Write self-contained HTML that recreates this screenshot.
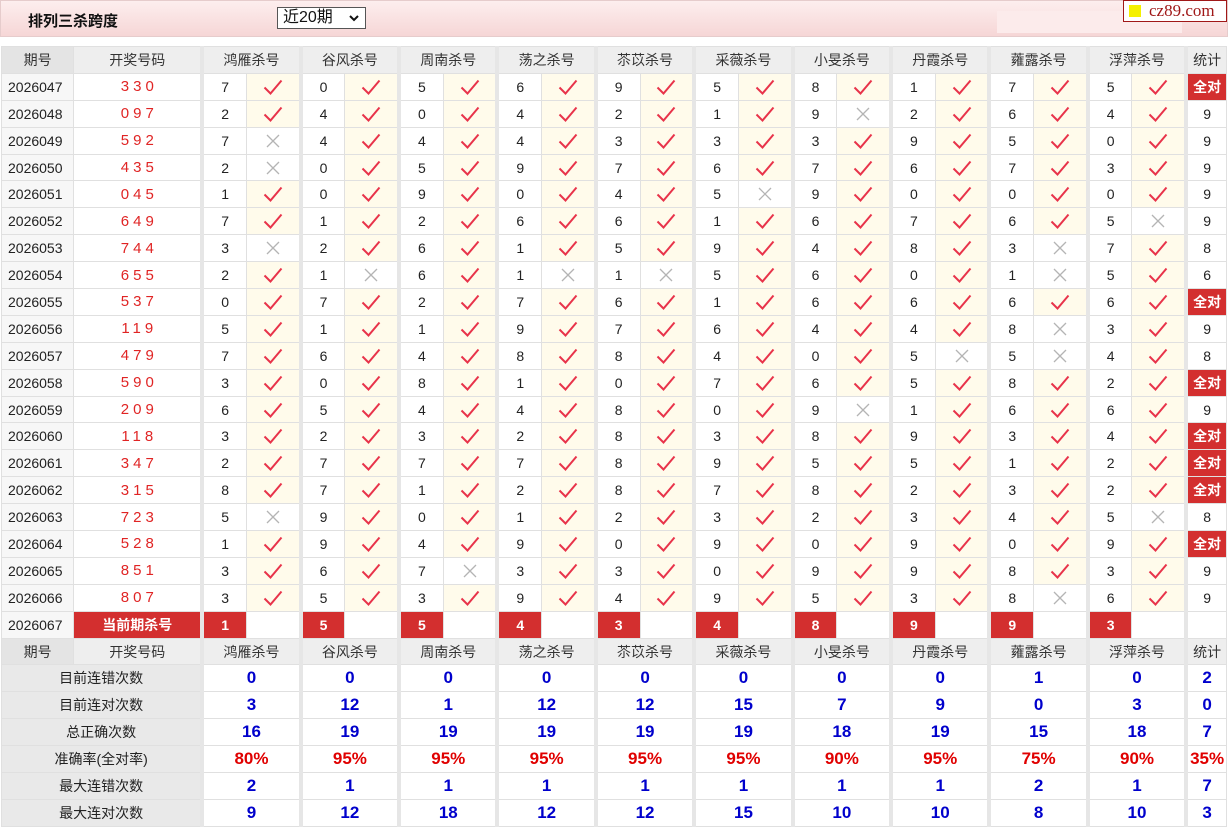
<!DOCTYPE html>
<html><head><meta charset="utf-8"><style>
*{box-sizing:border-box}
body{margin:0;background:#fff;font-family:"Liberation Sans","Noto Sans CJK SC",sans-serif;width:1228px;height:829px;overflow:hidden;position:relative}
.top{position:absolute;left:0;top:0;width:1228px;height:37px;background:linear-gradient(#fdeeee,#f6d6d6);border:1px solid #e6cccc}
.title{position:absolute;left:27px;top:9px;font-size:15px;font-weight:bold;color:#111}
.sel{position:absolute;left:277px;top:7px;width:89px;height:22px;border:1px solid #555;background:#fff;font-size:16px;padding-left:5px;line-height:20px;color:#111}
.sel svg{position:absolute;right:6px;top:7px}
.wbox{position:absolute;left:996px;top:10px;width:185px;height:22px;background:#fcebeb}
.logo{position:absolute;left:1123px;top:0;width:104px;height:22px;background:#fff;border:1px solid #a01818;font-family:"Liberation Serif",serif;font-size:17px;color:#a01818;line-height:19px;padding-left:25px}
.logo i{position:absolute;left:5px;top:4px;width:12px;height:12px;background:#f4f000}
table{position:absolute;left:1px;top:46px;width:1226px;border-collapse:collapse;table-layout:fixed}
td{height:26.9px;border:1px solid #e0e0e0;text-align:center;font-size:14px;color:#222;padding:0;white-space:nowrap}
tr.h td{background:#eeeeee;color:#333;font-size:14px}
td.g{border-right:4px solid #e6e6e6}
td.p{text-align:left;padding-left:6px;background:#f7f7f7}
tr.h td.p{text-align:center;padding:0;background:#e4e4e4}
td.n{color:#e02424;letter-spacing:4px;padding-left:4px;font-size:15px}
td.k{background:#fffbeb}
td.x{background:#fff}
td.r{background:#d32f2f;color:#fff;font-weight:bold}
td.s{font-size:14px}
td.a{background:#d32f2f;color:#fff;font-weight:bold;font-size:14px}
td.l{background:#e9e9e9;color:#222}
td.b{color:#0000cc;font-weight:bold;font-size:17px}
td.pc{color:#e00000;font-weight:bold;font-size:17px}
svg.c,svg.xx{display:block;margin:auto}
</style></head><body>
<svg width="0" height="0" style="position:absolute"><defs>
<symbol id="c" viewBox="0 0 20 16"><path d="M1.5 8.5 L7.5 14.5 L18.5 1.5" fill="none" stroke="#e8334a" stroke-width="2"/></symbol>
<symbol id="x" viewBox="0 0 16 16"><path d="M2 2 L14 14 M14 2 L2 14" fill="none" stroke="#b4b4b4" stroke-width="1.3"/></symbol>
</defs></svg>
<div class="top"><div class="title">排列三杀跨度</div><div class="wbox"></div></div>
<div class="sel">近20期<svg width="10" height="7" viewBox="0 0 10 7"><path d="M1 1 L5 5 L9 1" fill="none" stroke="#111" stroke-width="2"/></svg></div>
<div class="logo"><i></i>cz89.com</div>
<table>
<colgroup><col style="width:72px"><col style="width:128px">
<col style="width:44px"><col style="width:54px"><col style="width:44px"><col style="width:54px"><col style="width:44px"><col style="width:54px"><col style="width:44px"><col style="width:54px"><col style="width:44px"><col style="width:54px"><col style="width:44px"><col style="width:54px"><col style="width:44px"><col style="width:54px"><col style="width:44px"><col style="width:54px"><col style="width:44px"><col style="width:54px"><col style="width:44px"><col style="width:54px"><col style="width:40px"></colgroup>
<tr class="h"><td class="p">期号</td><td class="g">开奖号码</td><td colspan="2" class="g">鸿雁杀号</td><td colspan="2" class="g">谷风杀号</td><td colspan="2" class="g">周南杀号</td><td colspan="2" class="g">荡之杀号</td><td colspan="2" class="g">苶苡杀号</td><td colspan="2" class="g">采薇杀号</td><td colspan="2" class="g">小旻杀号</td><td colspan="2" class="g">丹霞杀号</td><td colspan="2" class="g">蕹露杀号</td><td colspan="2" class="g">浮萍杀号</td><td>统计</td></tr>
<tr><td class="p">2026047</td><td class="n g">330</td><td>7</td><td class="k g"><svg class="c" width="20" height="16"><use href="#c"/></svg></td><td>0</td><td class="k g"><svg class="c" width="20" height="16"><use href="#c"/></svg></td><td>5</td><td class="k g"><svg class="c" width="20" height="16"><use href="#c"/></svg></td><td>6</td><td class="k g"><svg class="c" width="20" height="16"><use href="#c"/></svg></td><td>9</td><td class="k g"><svg class="c" width="20" height="16"><use href="#c"/></svg></td><td>5</td><td class="k g"><svg class="c" width="20" height="16"><use href="#c"/></svg></td><td>8</td><td class="k g"><svg class="c" width="20" height="16"><use href="#c"/></svg></td><td>1</td><td class="k g"><svg class="c" width="20" height="16"><use href="#c"/></svg></td><td>7</td><td class="k g"><svg class="c" width="20" height="16"><use href="#c"/></svg></td><td>5</td><td class="k g"><svg class="c" width="20" height="16"><use href="#c"/></svg></td><td class="a">全对</td></tr>
<tr><td class="p">2026048</td><td class="n g">097</td><td>2</td><td class="k g"><svg class="c" width="20" height="16"><use href="#c"/></svg></td><td>4</td><td class="k g"><svg class="c" width="20" height="16"><use href="#c"/></svg></td><td>0</td><td class="k g"><svg class="c" width="20" height="16"><use href="#c"/></svg></td><td>4</td><td class="k g"><svg class="c" width="20" height="16"><use href="#c"/></svg></td><td>2</td><td class="k g"><svg class="c" width="20" height="16"><use href="#c"/></svg></td><td>1</td><td class="k g"><svg class="c" width="20" height="16"><use href="#c"/></svg></td><td>9</td><td class="x g"><svg class="xx" width="16" height="16"><use href="#x"/></svg></td><td>2</td><td class="k g"><svg class="c" width="20" height="16"><use href="#c"/></svg></td><td>6</td><td class="k g"><svg class="c" width="20" height="16"><use href="#c"/></svg></td><td>4</td><td class="k g"><svg class="c" width="20" height="16"><use href="#c"/></svg></td><td class="s">9</td></tr>
<tr><td class="p">2026049</td><td class="n g">592</td><td>7</td><td class="x g"><svg class="xx" width="16" height="16"><use href="#x"/></svg></td><td>4</td><td class="k g"><svg class="c" width="20" height="16"><use href="#c"/></svg></td><td>4</td><td class="k g"><svg class="c" width="20" height="16"><use href="#c"/></svg></td><td>4</td><td class="k g"><svg class="c" width="20" height="16"><use href="#c"/></svg></td><td>3</td><td class="k g"><svg class="c" width="20" height="16"><use href="#c"/></svg></td><td>3</td><td class="k g"><svg class="c" width="20" height="16"><use href="#c"/></svg></td><td>3</td><td class="k g"><svg class="c" width="20" height="16"><use href="#c"/></svg></td><td>9</td><td class="k g"><svg class="c" width="20" height="16"><use href="#c"/></svg></td><td>5</td><td class="k g"><svg class="c" width="20" height="16"><use href="#c"/></svg></td><td>0</td><td class="k g"><svg class="c" width="20" height="16"><use href="#c"/></svg></td><td class="s">9</td></tr>
<tr><td class="p">2026050</td><td class="n g">435</td><td>2</td><td class="x g"><svg class="xx" width="16" height="16"><use href="#x"/></svg></td><td>0</td><td class="k g"><svg class="c" width="20" height="16"><use href="#c"/></svg></td><td>5</td><td class="k g"><svg class="c" width="20" height="16"><use href="#c"/></svg></td><td>9</td><td class="k g"><svg class="c" width="20" height="16"><use href="#c"/></svg></td><td>7</td><td class="k g"><svg class="c" width="20" height="16"><use href="#c"/></svg></td><td>6</td><td class="k g"><svg class="c" width="20" height="16"><use href="#c"/></svg></td><td>7</td><td class="k g"><svg class="c" width="20" height="16"><use href="#c"/></svg></td><td>6</td><td class="k g"><svg class="c" width="20" height="16"><use href="#c"/></svg></td><td>7</td><td class="k g"><svg class="c" width="20" height="16"><use href="#c"/></svg></td><td>3</td><td class="k g"><svg class="c" width="20" height="16"><use href="#c"/></svg></td><td class="s">9</td></tr>
<tr><td class="p">2026051</td><td class="n g">045</td><td>1</td><td class="k g"><svg class="c" width="20" height="16"><use href="#c"/></svg></td><td>0</td><td class="k g"><svg class="c" width="20" height="16"><use href="#c"/></svg></td><td>9</td><td class="k g"><svg class="c" width="20" height="16"><use href="#c"/></svg></td><td>0</td><td class="k g"><svg class="c" width="20" height="16"><use href="#c"/></svg></td><td>4</td><td class="k g"><svg class="c" width="20" height="16"><use href="#c"/></svg></td><td>5</td><td class="x g"><svg class="xx" width="16" height="16"><use href="#x"/></svg></td><td>9</td><td class="k g"><svg class="c" width="20" height="16"><use href="#c"/></svg></td><td>0</td><td class="k g"><svg class="c" width="20" height="16"><use href="#c"/></svg></td><td>0</td><td class="k g"><svg class="c" width="20" height="16"><use href="#c"/></svg></td><td>0</td><td class="k g"><svg class="c" width="20" height="16"><use href="#c"/></svg></td><td class="s">9</td></tr>
<tr><td class="p">2026052</td><td class="n g">649</td><td>7</td><td class="k g"><svg class="c" width="20" height="16"><use href="#c"/></svg></td><td>1</td><td class="k g"><svg class="c" width="20" height="16"><use href="#c"/></svg></td><td>2</td><td class="k g"><svg class="c" width="20" height="16"><use href="#c"/></svg></td><td>6</td><td class="k g"><svg class="c" width="20" height="16"><use href="#c"/></svg></td><td>6</td><td class="k g"><svg class="c" width="20" height="16"><use href="#c"/></svg></td><td>1</td><td class="k g"><svg class="c" width="20" height="16"><use href="#c"/></svg></td><td>6</td><td class="k g"><svg class="c" width="20" height="16"><use href="#c"/></svg></td><td>7</td><td class="k g"><svg class="c" width="20" height="16"><use href="#c"/></svg></td><td>6</td><td class="k g"><svg class="c" width="20" height="16"><use href="#c"/></svg></td><td>5</td><td class="x g"><svg class="xx" width="16" height="16"><use href="#x"/></svg></td><td class="s">9</td></tr>
<tr><td class="p">2026053</td><td class="n g">744</td><td>3</td><td class="x g"><svg class="xx" width="16" height="16"><use href="#x"/></svg></td><td>2</td><td class="k g"><svg class="c" width="20" height="16"><use href="#c"/></svg></td><td>6</td><td class="k g"><svg class="c" width="20" height="16"><use href="#c"/></svg></td><td>1</td><td class="k g"><svg class="c" width="20" height="16"><use href="#c"/></svg></td><td>5</td><td class="k g"><svg class="c" width="20" height="16"><use href="#c"/></svg></td><td>9</td><td class="k g"><svg class="c" width="20" height="16"><use href="#c"/></svg></td><td>4</td><td class="k g"><svg class="c" width="20" height="16"><use href="#c"/></svg></td><td>8</td><td class="k g"><svg class="c" width="20" height="16"><use href="#c"/></svg></td><td>3</td><td class="x g"><svg class="xx" width="16" height="16"><use href="#x"/></svg></td><td>7</td><td class="k g"><svg class="c" width="20" height="16"><use href="#c"/></svg></td><td class="s">8</td></tr>
<tr><td class="p">2026054</td><td class="n g">655</td><td>2</td><td class="k g"><svg class="c" width="20" height="16"><use href="#c"/></svg></td><td>1</td><td class="x g"><svg class="xx" width="16" height="16"><use href="#x"/></svg></td><td>6</td><td class="k g"><svg class="c" width="20" height="16"><use href="#c"/></svg></td><td>1</td><td class="x g"><svg class="xx" width="16" height="16"><use href="#x"/></svg></td><td>1</td><td class="x g"><svg class="xx" width="16" height="16"><use href="#x"/></svg></td><td>5</td><td class="k g"><svg class="c" width="20" height="16"><use href="#c"/></svg></td><td>6</td><td class="k g"><svg class="c" width="20" height="16"><use href="#c"/></svg></td><td>0</td><td class="k g"><svg class="c" width="20" height="16"><use href="#c"/></svg></td><td>1</td><td class="x g"><svg class="xx" width="16" height="16"><use href="#x"/></svg></td><td>5</td><td class="k g"><svg class="c" width="20" height="16"><use href="#c"/></svg></td><td class="s">6</td></tr>
<tr><td class="p">2026055</td><td class="n g">537</td><td>0</td><td class="k g"><svg class="c" width="20" height="16"><use href="#c"/></svg></td><td>7</td><td class="k g"><svg class="c" width="20" height="16"><use href="#c"/></svg></td><td>2</td><td class="k g"><svg class="c" width="20" height="16"><use href="#c"/></svg></td><td>7</td><td class="k g"><svg class="c" width="20" height="16"><use href="#c"/></svg></td><td>6</td><td class="k g"><svg class="c" width="20" height="16"><use href="#c"/></svg></td><td>1</td><td class="k g"><svg class="c" width="20" height="16"><use href="#c"/></svg></td><td>6</td><td class="k g"><svg class="c" width="20" height="16"><use href="#c"/></svg></td><td>6</td><td class="k g"><svg class="c" width="20" height="16"><use href="#c"/></svg></td><td>6</td><td class="k g"><svg class="c" width="20" height="16"><use href="#c"/></svg></td><td>6</td><td class="k g"><svg class="c" width="20" height="16"><use href="#c"/></svg></td><td class="a">全对</td></tr>
<tr><td class="p">2026056</td><td class="n g">119</td><td>5</td><td class="k g"><svg class="c" width="20" height="16"><use href="#c"/></svg></td><td>1</td><td class="k g"><svg class="c" width="20" height="16"><use href="#c"/></svg></td><td>1</td><td class="k g"><svg class="c" width="20" height="16"><use href="#c"/></svg></td><td>9</td><td class="k g"><svg class="c" width="20" height="16"><use href="#c"/></svg></td><td>7</td><td class="k g"><svg class="c" width="20" height="16"><use href="#c"/></svg></td><td>6</td><td class="k g"><svg class="c" width="20" height="16"><use href="#c"/></svg></td><td>4</td><td class="k g"><svg class="c" width="20" height="16"><use href="#c"/></svg></td><td>4</td><td class="k g"><svg class="c" width="20" height="16"><use href="#c"/></svg></td><td>8</td><td class="x g"><svg class="xx" width="16" height="16"><use href="#x"/></svg></td><td>3</td><td class="k g"><svg class="c" width="20" height="16"><use href="#c"/></svg></td><td class="s">9</td></tr>
<tr><td class="p">2026057</td><td class="n g">479</td><td>7</td><td class="k g"><svg class="c" width="20" height="16"><use href="#c"/></svg></td><td>6</td><td class="k g"><svg class="c" width="20" height="16"><use href="#c"/></svg></td><td>4</td><td class="k g"><svg class="c" width="20" height="16"><use href="#c"/></svg></td><td>8</td><td class="k g"><svg class="c" width="20" height="16"><use href="#c"/></svg></td><td>8</td><td class="k g"><svg class="c" width="20" height="16"><use href="#c"/></svg></td><td>4</td><td class="k g"><svg class="c" width="20" height="16"><use href="#c"/></svg></td><td>0</td><td class="k g"><svg class="c" width="20" height="16"><use href="#c"/></svg></td><td>5</td><td class="x g"><svg class="xx" width="16" height="16"><use href="#x"/></svg></td><td>5</td><td class="x g"><svg class="xx" width="16" height="16"><use href="#x"/></svg></td><td>4</td><td class="k g"><svg class="c" width="20" height="16"><use href="#c"/></svg></td><td class="s">8</td></tr>
<tr><td class="p">2026058</td><td class="n g">590</td><td>3</td><td class="k g"><svg class="c" width="20" height="16"><use href="#c"/></svg></td><td>0</td><td class="k g"><svg class="c" width="20" height="16"><use href="#c"/></svg></td><td>8</td><td class="k g"><svg class="c" width="20" height="16"><use href="#c"/></svg></td><td>1</td><td class="k g"><svg class="c" width="20" height="16"><use href="#c"/></svg></td><td>0</td><td class="k g"><svg class="c" width="20" height="16"><use href="#c"/></svg></td><td>7</td><td class="k g"><svg class="c" width="20" height="16"><use href="#c"/></svg></td><td>6</td><td class="k g"><svg class="c" width="20" height="16"><use href="#c"/></svg></td><td>5</td><td class="k g"><svg class="c" width="20" height="16"><use href="#c"/></svg></td><td>8</td><td class="k g"><svg class="c" width="20" height="16"><use href="#c"/></svg></td><td>2</td><td class="k g"><svg class="c" width="20" height="16"><use href="#c"/></svg></td><td class="a">全对</td></tr>
<tr><td class="p">2026059</td><td class="n g">209</td><td>6</td><td class="k g"><svg class="c" width="20" height="16"><use href="#c"/></svg></td><td>5</td><td class="k g"><svg class="c" width="20" height="16"><use href="#c"/></svg></td><td>4</td><td class="k g"><svg class="c" width="20" height="16"><use href="#c"/></svg></td><td>4</td><td class="k g"><svg class="c" width="20" height="16"><use href="#c"/></svg></td><td>8</td><td class="k g"><svg class="c" width="20" height="16"><use href="#c"/></svg></td><td>0</td><td class="k g"><svg class="c" width="20" height="16"><use href="#c"/></svg></td><td>9</td><td class="x g"><svg class="xx" width="16" height="16"><use href="#x"/></svg></td><td>1</td><td class="k g"><svg class="c" width="20" height="16"><use href="#c"/></svg></td><td>6</td><td class="k g"><svg class="c" width="20" height="16"><use href="#c"/></svg></td><td>6</td><td class="k g"><svg class="c" width="20" height="16"><use href="#c"/></svg></td><td class="s">9</td></tr>
<tr><td class="p">2026060</td><td class="n g">118</td><td>3</td><td class="k g"><svg class="c" width="20" height="16"><use href="#c"/></svg></td><td>2</td><td class="k g"><svg class="c" width="20" height="16"><use href="#c"/></svg></td><td>3</td><td class="k g"><svg class="c" width="20" height="16"><use href="#c"/></svg></td><td>2</td><td class="k g"><svg class="c" width="20" height="16"><use href="#c"/></svg></td><td>8</td><td class="k g"><svg class="c" width="20" height="16"><use href="#c"/></svg></td><td>3</td><td class="k g"><svg class="c" width="20" height="16"><use href="#c"/></svg></td><td>8</td><td class="k g"><svg class="c" width="20" height="16"><use href="#c"/></svg></td><td>9</td><td class="k g"><svg class="c" width="20" height="16"><use href="#c"/></svg></td><td>3</td><td class="k g"><svg class="c" width="20" height="16"><use href="#c"/></svg></td><td>4</td><td class="k g"><svg class="c" width="20" height="16"><use href="#c"/></svg></td><td class="a">全对</td></tr>
<tr><td class="p">2026061</td><td class="n g">347</td><td>2</td><td class="k g"><svg class="c" width="20" height="16"><use href="#c"/></svg></td><td>7</td><td class="k g"><svg class="c" width="20" height="16"><use href="#c"/></svg></td><td>7</td><td class="k g"><svg class="c" width="20" height="16"><use href="#c"/></svg></td><td>7</td><td class="k g"><svg class="c" width="20" height="16"><use href="#c"/></svg></td><td>8</td><td class="k g"><svg class="c" width="20" height="16"><use href="#c"/></svg></td><td>9</td><td class="k g"><svg class="c" width="20" height="16"><use href="#c"/></svg></td><td>5</td><td class="k g"><svg class="c" width="20" height="16"><use href="#c"/></svg></td><td>5</td><td class="k g"><svg class="c" width="20" height="16"><use href="#c"/></svg></td><td>1</td><td class="k g"><svg class="c" width="20" height="16"><use href="#c"/></svg></td><td>2</td><td class="k g"><svg class="c" width="20" height="16"><use href="#c"/></svg></td><td class="a">全对</td></tr>
<tr><td class="p">2026062</td><td class="n g">315</td><td>8</td><td class="k g"><svg class="c" width="20" height="16"><use href="#c"/></svg></td><td>7</td><td class="k g"><svg class="c" width="20" height="16"><use href="#c"/></svg></td><td>1</td><td class="k g"><svg class="c" width="20" height="16"><use href="#c"/></svg></td><td>2</td><td class="k g"><svg class="c" width="20" height="16"><use href="#c"/></svg></td><td>8</td><td class="k g"><svg class="c" width="20" height="16"><use href="#c"/></svg></td><td>7</td><td class="k g"><svg class="c" width="20" height="16"><use href="#c"/></svg></td><td>8</td><td class="k g"><svg class="c" width="20" height="16"><use href="#c"/></svg></td><td>2</td><td class="k g"><svg class="c" width="20" height="16"><use href="#c"/></svg></td><td>3</td><td class="k g"><svg class="c" width="20" height="16"><use href="#c"/></svg></td><td>2</td><td class="k g"><svg class="c" width="20" height="16"><use href="#c"/></svg></td><td class="a">全对</td></tr>
<tr><td class="p">2026063</td><td class="n g">723</td><td>5</td><td class="x g"><svg class="xx" width="16" height="16"><use href="#x"/></svg></td><td>9</td><td class="k g"><svg class="c" width="20" height="16"><use href="#c"/></svg></td><td>0</td><td class="k g"><svg class="c" width="20" height="16"><use href="#c"/></svg></td><td>1</td><td class="k g"><svg class="c" width="20" height="16"><use href="#c"/></svg></td><td>2</td><td class="k g"><svg class="c" width="20" height="16"><use href="#c"/></svg></td><td>3</td><td class="k g"><svg class="c" width="20" height="16"><use href="#c"/></svg></td><td>2</td><td class="k g"><svg class="c" width="20" height="16"><use href="#c"/></svg></td><td>3</td><td class="k g"><svg class="c" width="20" height="16"><use href="#c"/></svg></td><td>4</td><td class="k g"><svg class="c" width="20" height="16"><use href="#c"/></svg></td><td>5</td><td class="x g"><svg class="xx" width="16" height="16"><use href="#x"/></svg></td><td class="s">8</td></tr>
<tr><td class="p">2026064</td><td class="n g">528</td><td>1</td><td class="k g"><svg class="c" width="20" height="16"><use href="#c"/></svg></td><td>9</td><td class="k g"><svg class="c" width="20" height="16"><use href="#c"/></svg></td><td>4</td><td class="k g"><svg class="c" width="20" height="16"><use href="#c"/></svg></td><td>9</td><td class="k g"><svg class="c" width="20" height="16"><use href="#c"/></svg></td><td>0</td><td class="k g"><svg class="c" width="20" height="16"><use href="#c"/></svg></td><td>9</td><td class="k g"><svg class="c" width="20" height="16"><use href="#c"/></svg></td><td>0</td><td class="k g"><svg class="c" width="20" height="16"><use href="#c"/></svg></td><td>9</td><td class="k g"><svg class="c" width="20" height="16"><use href="#c"/></svg></td><td>0</td><td class="k g"><svg class="c" width="20" height="16"><use href="#c"/></svg></td><td>9</td><td class="k g"><svg class="c" width="20" height="16"><use href="#c"/></svg></td><td class="a">全对</td></tr>
<tr><td class="p">2026065</td><td class="n g">851</td><td>3</td><td class="k g"><svg class="c" width="20" height="16"><use href="#c"/></svg></td><td>6</td><td class="k g"><svg class="c" width="20" height="16"><use href="#c"/></svg></td><td>7</td><td class="x g"><svg class="xx" width="16" height="16"><use href="#x"/></svg></td><td>3</td><td class="k g"><svg class="c" width="20" height="16"><use href="#c"/></svg></td><td>3</td><td class="k g"><svg class="c" width="20" height="16"><use href="#c"/></svg></td><td>0</td><td class="k g"><svg class="c" width="20" height="16"><use href="#c"/></svg></td><td>9</td><td class="k g"><svg class="c" width="20" height="16"><use href="#c"/></svg></td><td>9</td><td class="k g"><svg class="c" width="20" height="16"><use href="#c"/></svg></td><td>8</td><td class="k g"><svg class="c" width="20" height="16"><use href="#c"/></svg></td><td>3</td><td class="k g"><svg class="c" width="20" height="16"><use href="#c"/></svg></td><td class="s">9</td></tr>
<tr><td class="p">2026066</td><td class="n g">807</td><td>3</td><td class="k g"><svg class="c" width="20" height="16"><use href="#c"/></svg></td><td>5</td><td class="k g"><svg class="c" width="20" height="16"><use href="#c"/></svg></td><td>3</td><td class="k g"><svg class="c" width="20" height="16"><use href="#c"/></svg></td><td>9</td><td class="k g"><svg class="c" width="20" height="16"><use href="#c"/></svg></td><td>4</td><td class="k g"><svg class="c" width="20" height="16"><use href="#c"/></svg></td><td>9</td><td class="k g"><svg class="c" width="20" height="16"><use href="#c"/></svg></td><td>5</td><td class="k g"><svg class="c" width="20" height="16"><use href="#c"/></svg></td><td>3</td><td class="k g"><svg class="c" width="20" height="16"><use href="#c"/></svg></td><td>8</td><td class="x g"><svg class="xx" width="16" height="16"><use href="#x"/></svg></td><td>6</td><td class="k g"><svg class="c" width="20" height="16"><use href="#c"/></svg></td><td class="s">9</td></tr>
<tr><td class="p">2026067</td><td class="r g">当前期杀号</td><td class="r">1</td><td class="x g"></td><td class="r">5</td><td class="x g"></td><td class="r">5</td><td class="x g"></td><td class="r">4</td><td class="x g"></td><td class="r">3</td><td class="x g"></td><td class="r">4</td><td class="x g"></td><td class="r">8</td><td class="x g"></td><td class="r">9</td><td class="x g"></td><td class="r">9</td><td class="x g"></td><td class="r">3</td><td class="x g"></td><td></td></tr>
<tr class="h"><td class="p">期号</td><td class="g">开奖号码</td><td colspan="2" class="g">鸿雁杀号</td><td colspan="2" class="g">谷风杀号</td><td colspan="2" class="g">周南杀号</td><td colspan="2" class="g">荡之杀号</td><td colspan="2" class="g">苶苡杀号</td><td colspan="2" class="g">采薇杀号</td><td colspan="2" class="g">小旻杀号</td><td colspan="2" class="g">丹霞杀号</td><td colspan="2" class="g">蕹露杀号</td><td colspan="2" class="g">浮萍杀号</td><td>统计</td></tr>
<tr><td colspan="2" class="l g">目前连错次数</td><td colspan="2" class="b g">0</td><td colspan="2" class="b g">0</td><td colspan="2" class="b g">0</td><td colspan="2" class="b g">0</td><td colspan="2" class="b g">0</td><td colspan="2" class="b g">0</td><td colspan="2" class="b g">0</td><td colspan="2" class="b g">0</td><td colspan="2" class="b g">1</td><td colspan="2" class="b g">0</td><td class="b">2</td></tr>
<tr><td colspan="2" class="l g">目前连对次数</td><td colspan="2" class="b g">3</td><td colspan="2" class="b g">12</td><td colspan="2" class="b g">1</td><td colspan="2" class="b g">12</td><td colspan="2" class="b g">12</td><td colspan="2" class="b g">15</td><td colspan="2" class="b g">7</td><td colspan="2" class="b g">9</td><td colspan="2" class="b g">0</td><td colspan="2" class="b g">3</td><td class="b">0</td></tr>
<tr><td colspan="2" class="l g">总正确次数</td><td colspan="2" class="b g">16</td><td colspan="2" class="b g">19</td><td colspan="2" class="b g">19</td><td colspan="2" class="b g">19</td><td colspan="2" class="b g">19</td><td colspan="2" class="b g">19</td><td colspan="2" class="b g">18</td><td colspan="2" class="b g">19</td><td colspan="2" class="b g">15</td><td colspan="2" class="b g">18</td><td class="b">7</td></tr>
<tr><td colspan="2" class="l g">准确率(全对率)</td><td colspan="2" class="pc g">80%</td><td colspan="2" class="pc g">95%</td><td colspan="2" class="pc g">95%</td><td colspan="2" class="pc g">95%</td><td colspan="2" class="pc g">95%</td><td colspan="2" class="pc g">95%</td><td colspan="2" class="pc g">90%</td><td colspan="2" class="pc g">95%</td><td colspan="2" class="pc g">75%</td><td colspan="2" class="pc g">90%</td><td class="pc">35%</td></tr>
<tr><td colspan="2" class="l g">最大连错次数</td><td colspan="2" class="b g">2</td><td colspan="2" class="b g">1</td><td colspan="2" class="b g">1</td><td colspan="2" class="b g">1</td><td colspan="2" class="b g">1</td><td colspan="2" class="b g">1</td><td colspan="2" class="b g">1</td><td colspan="2" class="b g">1</td><td colspan="2" class="b g">2</td><td colspan="2" class="b g">1</td><td class="b">7</td></tr>
<tr><td colspan="2" class="l g">最大连对次数</td><td colspan="2" class="b g">9</td><td colspan="2" class="b g">12</td><td colspan="2" class="b g">18</td><td colspan="2" class="b g">12</td><td colspan="2" class="b g">12</td><td colspan="2" class="b g">15</td><td colspan="2" class="b g">10</td><td colspan="2" class="b g">10</td><td colspan="2" class="b g">8</td><td colspan="2" class="b g">10</td><td class="b">3</td></tr>
</table>
</body></html>
